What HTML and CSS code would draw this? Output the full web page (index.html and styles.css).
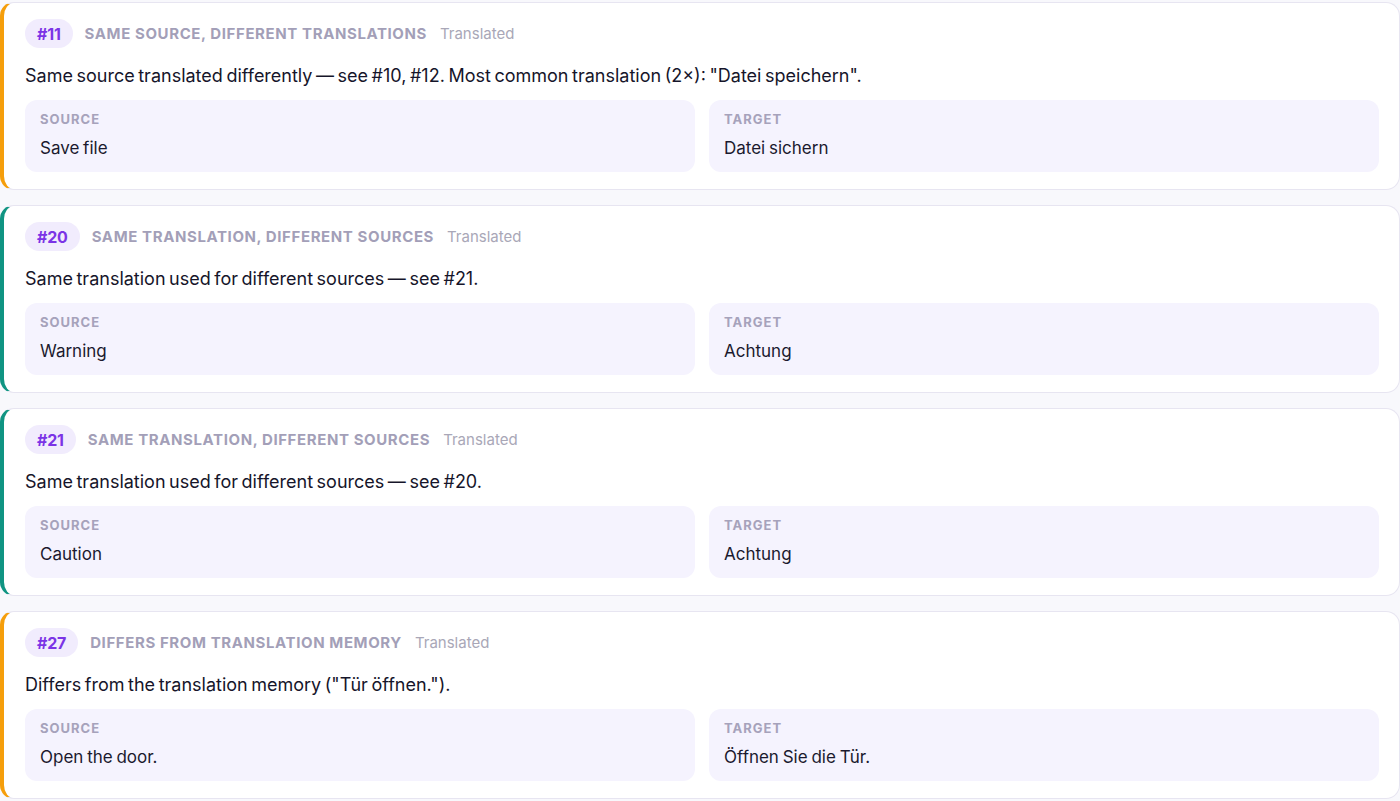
FILE: index.html
```html
<!DOCTYPE html>
<html lang="en">
<head>
<meta charset="utf-8">
<title>QA issues</title>
<link rel="stylesheet" href="styles.css">
</head>
<body>
<main class="issues">
  <article class="issue issue--warn">
    <header class="issue-head">
      <span class="issue-id">#11</span>
      <span class="issue-kind">Same source, different translations</span>
      <span class="issue-status">Translated</span>
    </header>
    <p class="issue-msg">Same source translated differently — see #10, #12. Most common translation (2×): "Datei speichern".</p>
    <div class="issue-fields">
      <div class="field"><div class="field-label">Source</div><div class="field-value">Save file</div></div>
      <div class="field"><div class="field-label">Target</div><div class="field-value">Datei sichern</div></div>
    </div>
  </article>

  <article class="issue issue--info">
    <header class="issue-head">
      <span class="issue-id">#20</span>
      <span class="issue-kind">Same translation, different sources</span>
      <span class="issue-status">Translated</span>
    </header>
    <p class="issue-msg">Same translation used for different sources — see #21.</p>
    <div class="issue-fields">
      <div class="field"><div class="field-label">Source</div><div class="field-value">Warning</div></div>
      <div class="field"><div class="field-label">Target</div><div class="field-value">Achtung</div></div>
    </div>
  </article>

  <article class="issue issue--info">
    <header class="issue-head">
      <span class="issue-id">#21</span>
      <span class="issue-kind">Same translation, different sources</span>
      <span class="issue-status">Translated</span>
    </header>
    <p class="issue-msg">Same translation used for different sources — see #20.</p>
    <div class="issue-fields">
      <div class="field"><div class="field-label">Source</div><div class="field-value">Caution</div></div>
      <div class="field"><div class="field-label">Target</div><div class="field-value">Achtung</div></div>
    </div>
  </article>

  <article class="issue issue--warn">
    <header class="issue-head">
      <span class="issue-id">#27</span>
      <span class="issue-kind">Differs from translation memory</span>
      <span class="issue-status">Translated</span>
    </header>
    <p class="issue-msg">Differs from the translation memory ("Tür öffnen.").</p>
    <div class="issue-fields">
      <div class="field"><div class="field-label">Source</div><div class="field-value">Open the door.</div></div>
      <div class="field"><div class="field-label">Target</div><div class="field-value">Öffnen Sie die Tür.</div></div>
    </div>
  </article>
</main>
</body>
</html>
```

FILE: styles.css
```css
* {
  box-sizing: border-box;
}

html, body {
  margin: 0;
  background: #f8f8fc;
}

body {
  font-family: Inter, "Noto Sans", sans-serif;
  color: #16152a;
}

.issues {
  display: flex;
  flex-direction: column;
  gap: 15px;
  padding-top: 2px;
}

.issue {
  background: #ffffff;
  border: 1px solid #e7e5f1;
  border-left: 4px solid #f59e0b;
  border-radius: 14px;
  padding: 16px 20px 17px 21px;
  display: flex;
  flex-direction: column;
}

.issue--warn {
  border-left-color: #f59e0b;
}

.issue--info {
  border-left-color: #0f9482;
}

.issue-head {
  display: flex;
  align-items: center;
  height: 29px;
}

.issue-id {
  display: inline-flex;
  align-items: center;
  height: 29px;
  padding: 0 12px;
  border-radius: 15px;
  background: #f1ecfd;
  color: #7b34e6;
  font-weight: 700;
  font-size: 16px;
  letter-spacing: -0.2px;
}

.issue-kind {
  margin-left: 12px;
  color: #a39fb8;
  font-weight: 700;
  font-size: 15px;
  text-transform: uppercase;
  letter-spacing: 0.6px;
}

.issue-status {
  margin-left: 13px;
  color: #a9a7b7;
  font-size: 15px;
}

.issue-msg {
  margin: 15px 0 11px;
  font-size: 18px;
  line-height: 26px;
  letter-spacing: 0;
  word-spacing: -1.5px;
}

.issue-fields {
  display: grid;
  grid-template-columns: 1fr 1fr;
  gap: 14px;
}

.field {
  background: #f5f3fe;
  border-radius: 12px;
  height: 72px;
  padding: 11px 15px 0;
}

.field-label {
  font-size: 13px;
  line-height: 16px;
  font-weight: 700;
  color: #a6a2bb;
  text-transform: uppercase;
  letter-spacing: 1px;
}

.field-value {
  margin-top: 9px;
  font-size: 17px;
  line-height: 24px;
  letter-spacing: 0;
  word-spacing: -1px;
  color: #1b1a2e;
}
```
